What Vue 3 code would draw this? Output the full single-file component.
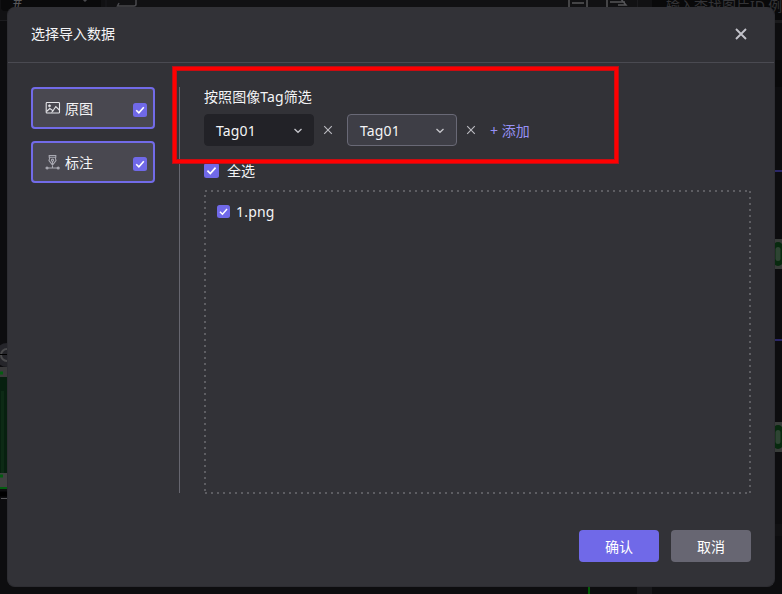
<script setup>
import { ref } from 'vue'

const sources = ref([
  { id: 'image', label: '原图', checked: true },
  { id: 'label', label: '标注', checked: true },
])
const tags = ref([
  { name: 'Tag01', open: false },
  { name: 'Tag01', open: true },
])
const files = ref(['1.png'])
</script>

<template>
  <div class="page">
    <svg class="canvas" width="782" height="594" viewBox="0 0 782 594" aria-hidden="true">
      <rect width="782" height="594" fill="#0d0d0f" />
      <rect x="0" y="0" width="782" height="20" fill="#111113" />
      <rect x="1" y="-8" width="100" height="19" rx="4" fill="#0a0a0b" />
      <path d="M106 0V8M637.500 0V8" stroke="#1b1b1e" />
      <rect x="652" y="-8" width="140" height="28" fill="#09090a" />
      <path d="M0 20.500H7" stroke="#1c1c1f" />
      <path d="M82 -2L85 1L88 -2" fill="none" stroke="#4a4a4e" stroke-width="1.500" />
      <path d="M119 3L117.500 6H134Q136 6 136 4V-2" fill="none" stroke="#4a4a4e" stroke-width="1.500" />
      <path d="M569 -1V8M587 -1V8M572 3H584M607 -1V8M610 2H625M620 -2L626 5H618" fill="none" stroke="#555558" stroke-width="1.500" />
      <text x="13" y="7" class="backdrop-text">#</text>
      <text x="666" y="11" class="backdrop-text dim">输入查找图片ID,例</text>
      <rect x="774" y="20" width="8" height="3" fill="#1a1a1c" />
      <rect x="774" y="60" width="8" height="27" fill="#09090a" />
      <path d="M774 171H782M774 340H782" stroke="#2b2768" stroke-width="2" />
      <g v-for="y in [239, 422]" :key="y">
        <rect x="774" :y="y" width="8" height="30" fill="#393d3a" />
        <rect x="773" :y="y + 3" width="10" height="24" rx="5" fill="#082a0f" />
        <rect x="775.500" :y="y + 8" width="5" height="14" rx="2.500" fill="#2e4433" />
      </g>
      <circle cx="7" cy="355" r="12" fill="#25252a" />
      <circle cx="7" cy="355" r="6" fill="none" stroke="#4a4a4c" stroke-width="2" />
      <path d="M0 354.500H7" stroke="#000" />
      <rect x="0" y="367" width="7" height="10" fill="#3a3a3b" />
      <rect x="0" y="377" width="7" height="96" fill="#07200f" />
      <rect x="1" y="391" width="3" height="82" fill="#0d2a15" />
      <rect x="0" y="473" width="7" height="14" fill="#414242" />
      <path d="M0 373H3M0 476H3" stroke="#035d10" stroke-width="3" />
      <path d="M0 488H7" stroke="#035d10" stroke-width="2" />
      <path d="M0 494H7" stroke="#000" stroke-width="5" />
      <path d="M1 498.500H7" stroke="#58585a" />
      <path d="M589 586V594" stroke="#035d06" stroke-width="2" />
      <rect x="637" y="586" width="15" height="8" fill="#18181b" />
      <rect x="774" y="524" width="8" height="12" fill="#111113" />
    </svg>

    <section class="dialog" role="dialog">
      <header class="head">
        <span>选择导入数据</span>
        <button class="close" aria-label="关闭">
          <svg width="12" height="12" viewBox="0 0 12 12"><path d="M1 1L11 11M11 1L1 11" fill="none" stroke="#c3c3ca" stroke-width="1.900" /></svg>
        </button>
      </header>

      <div class="body">
        <nav class="sources">
          <label v-for="s in sources" :key="s.id" class="source">
            <svg v-if="s.id === 'image'" width="16" height="14" viewBox="0 0 16 14" fill="none" stroke="#e4e4e8" stroke-width="1.100">
              <rect x="1.200" y="1.500" width="13.300" height="10.500" rx="0.800" />
              <circle cx="4.500" cy="4.800" r="1.100" fill="#e4e4e8" stroke-width="0.600" />
              <path d="M1.500 10.500L4.800 7.500L8 9.700L10.800 5.500L14.300 9M6.500 11.500L8.500 9.300" />
            </svg>
            <svg v-else width="16" height="16" viewBox="0 0 16 16" fill="none" stroke="#a9a9b2" stroke-width="1.100">
              <path d="M4.200 1.500H10.800V3.300H4.200ZM4.800 3.300L4 6.500L7.500 11L11 6.500L10.200 3.300M7.500 7V14M2 14H13" />
              <circle cx="7.500" cy="6.200" r="1.100" />
              <circle cx="2" cy="14" r="1" fill="#a9a9b2" />
              <circle cx="13.200" cy="14" r="1" fill="#a9a9b2" />
            </svg>
            <span class="source-name">{{ s.label }}</span>
            <span class="check"><svg viewBox="0 0 14 14"><path d="M3.200 7.200L5.900 9.900L10.800 4.300" /></svg></span>
          </label>
        </nav>

        <main class="content">
          <div class="filter-title">按照图像Tag筛选</div>
          <div class="filter-row">
            <template v-for="(t, i) in tags" :key="i">
              <div class="select" :class="{ active: t.open }">
                <span>{{ t.name }}</span>
                <svg width="10" height="6" viewBox="0 0 10 6"><path d="M1.500 1L5 4.300L8.500 1" fill="none" stroke="#c5c5cb" stroke-width="1.300" /></svg>
              </div>
              <svg class="remove" width="10" height="10" viewBox="0 0 10 10"><path d="M1.200 1.200L8.800 8.800M8.800 1.200L1.200 8.800" fill="none" stroke="#bcbcc2" stroke-width="1.100" /></svg>
            </template>
            <span class="add">+ 添加</span>
          </div>
          <label class="all">
            <span class="check large"><svg viewBox="0 0 14 14"><path d="M3.200 7.200L5.900 9.900L10.800 4.300" /></svg></span>
            <span>全选</span>
          </label>
          <div class="files">
            <svg class="dots" width="547" height="304" viewBox="0 0 547 304" fill="none" stroke="#5d5d62" stroke-width="2" stroke-dasharray="2 4">
              <path d="M1 1H547M1 303H547M1 5V304M546 1V304" />
            </svg>
            <label v-for="f in files" :key="f" class="file">
              <span class="check small"><svg viewBox="0 0 14 14"><path d="M3.200 7.200L5.900 9.900L10.800 4.300" /></svg></span>
              <span class="file-name">{{ f }}</span>
            </label>
          </div>
        </main>
      </div>

      <footer class="foot">
        <button class="btn primary">确认</button>
        <button class="btn">取消</button>
      </footer>
    </section>
    <div class="highlight"></div>
  </div>
</template>

<style>
body { margin: 0; background: #0d0d0f; }
</style>

<style scoped>
.page {
  position: relative;
  box-sizing: border-box;
  width: 782px;
  height: 594px;
  padding: 7px;
  overflow: hidden;
  font: 14px/20px "Noto Sans", "Noto Sans CJK SC", sans-serif;
  color: #f4f4f6;
}
.canvas { position: absolute; left: 0; top: 0; }
.backdrop-text { font-size: 14px; fill: #58585b; }
.backdrop-text.dim { fill: #343437; }
.dialog {
  position: relative;
  box-sizing: border-box;
  display: flex;
  flex-direction: column;
  width: 768px;
  height: 580px;
  border: 1px solid #2d2d32;
  border-top-color: #323237;
  border-radius: 8px;
  background: #323237;
}
.head {
  box-sizing: border-box;
  display: flex;
  flex: none;
  align-items: center;
  justify-content: space-between;
  height: 55px;
  padding: 0 27px 2px 23px;
  border-bottom: 1px solid #4a4a51;
}
.close { display: flex; padding: 0; border: 0; background: none; }
.body { display: flex; flex: none; height: 407px; padding: 24px 23px 0; }
.sources {
  box-sizing: border-box;
  display: flex;
  flex-direction: column;
  gap: 12px;
  width: 149px;
  height: 406px;
  padding-right: 24px;
  border-right: 1px solid #66666f;
}
.source {
  box-sizing: border-box;
  display: flex;
  align-items: center;
  height: 42px;
  padding: 0 6px 0 12px;
  border: 2px solid #726be8;
  border-radius: 4px;
  background: #494850;
}
.source-name { margin-left: 4px; padding-top: 2px; }
.check {
  display: flex;
  flex: none;
  width: 14px;
  height: 14px;
  border-radius: 2.5px;
  background: #7069e8;
}
.check svg { width: 100%; height: 100%; fill: none; stroke: #fff; stroke-width: 1.6; }
.source .check { margin: 3px 0 0 auto; }
.check.large { width: 15px; height: 15px; margin-bottom: 2px; }
.check.small { width: 13px; height: 13px; margin-bottom: 1px; }
.content { width: 547px; margin-left: 24px; }
.filter-title { height: 27px; letter-spacing: 0.08px; }
.filter-row { display: flex; align-items: center; height: 32px; }
.select {
  box-sizing: border-box;
  display: flex;
  align-items: center;
  justify-content: space-between;
  width: 110px;
  height: 32px;
  padding: 1px 10px 0 11px;
  border: 1px solid #222227;
  border-radius: 4px;
  background: #222227;
  letter-spacing: 0.15px;
}
.select.active { padding: 1px 11px 0 12px; border-color: #696976; background: #3e3e46; }
.remove { margin: 0 14px 0 9px; }
.add { padding-top: 2px; color: #9791f5; }
.all { display: flex; align-items: center; gap: 8px; height: 20px; margin-top: 15px; }
.files { position: relative; box-sizing: border-box; height: 304px; margin-top: 9px; padding: 12px 13px; }
.dots { position: absolute; left: 0; top: 0; }
.file { display: flex; align-items: center; gap: 6px; }
.file-name { letter-spacing: 0.2px; }
.foot { display: flex; gap: 12px; justify-content: flex-end; padding: 36px 23px 0; }
.btn {
  width: 80px;
  height: 32px;
  padding: 2px 0 0;
  border: 0;
  border-radius: 4px;
  background: #676672;
  color: #fff;
  font: inherit;
}
.btn.primary { background: #7069e8; }
.highlight {
  position: absolute;
  box-sizing: border-box;
  left: 173px;
  top: 67px;
  width: 445px;
  height: 96px;
  border: 3px solid #f00;
  box-shadow: 0 0 0 1px #b5101a, inset 0 0 0 1px #c90d12;
}
</style>
